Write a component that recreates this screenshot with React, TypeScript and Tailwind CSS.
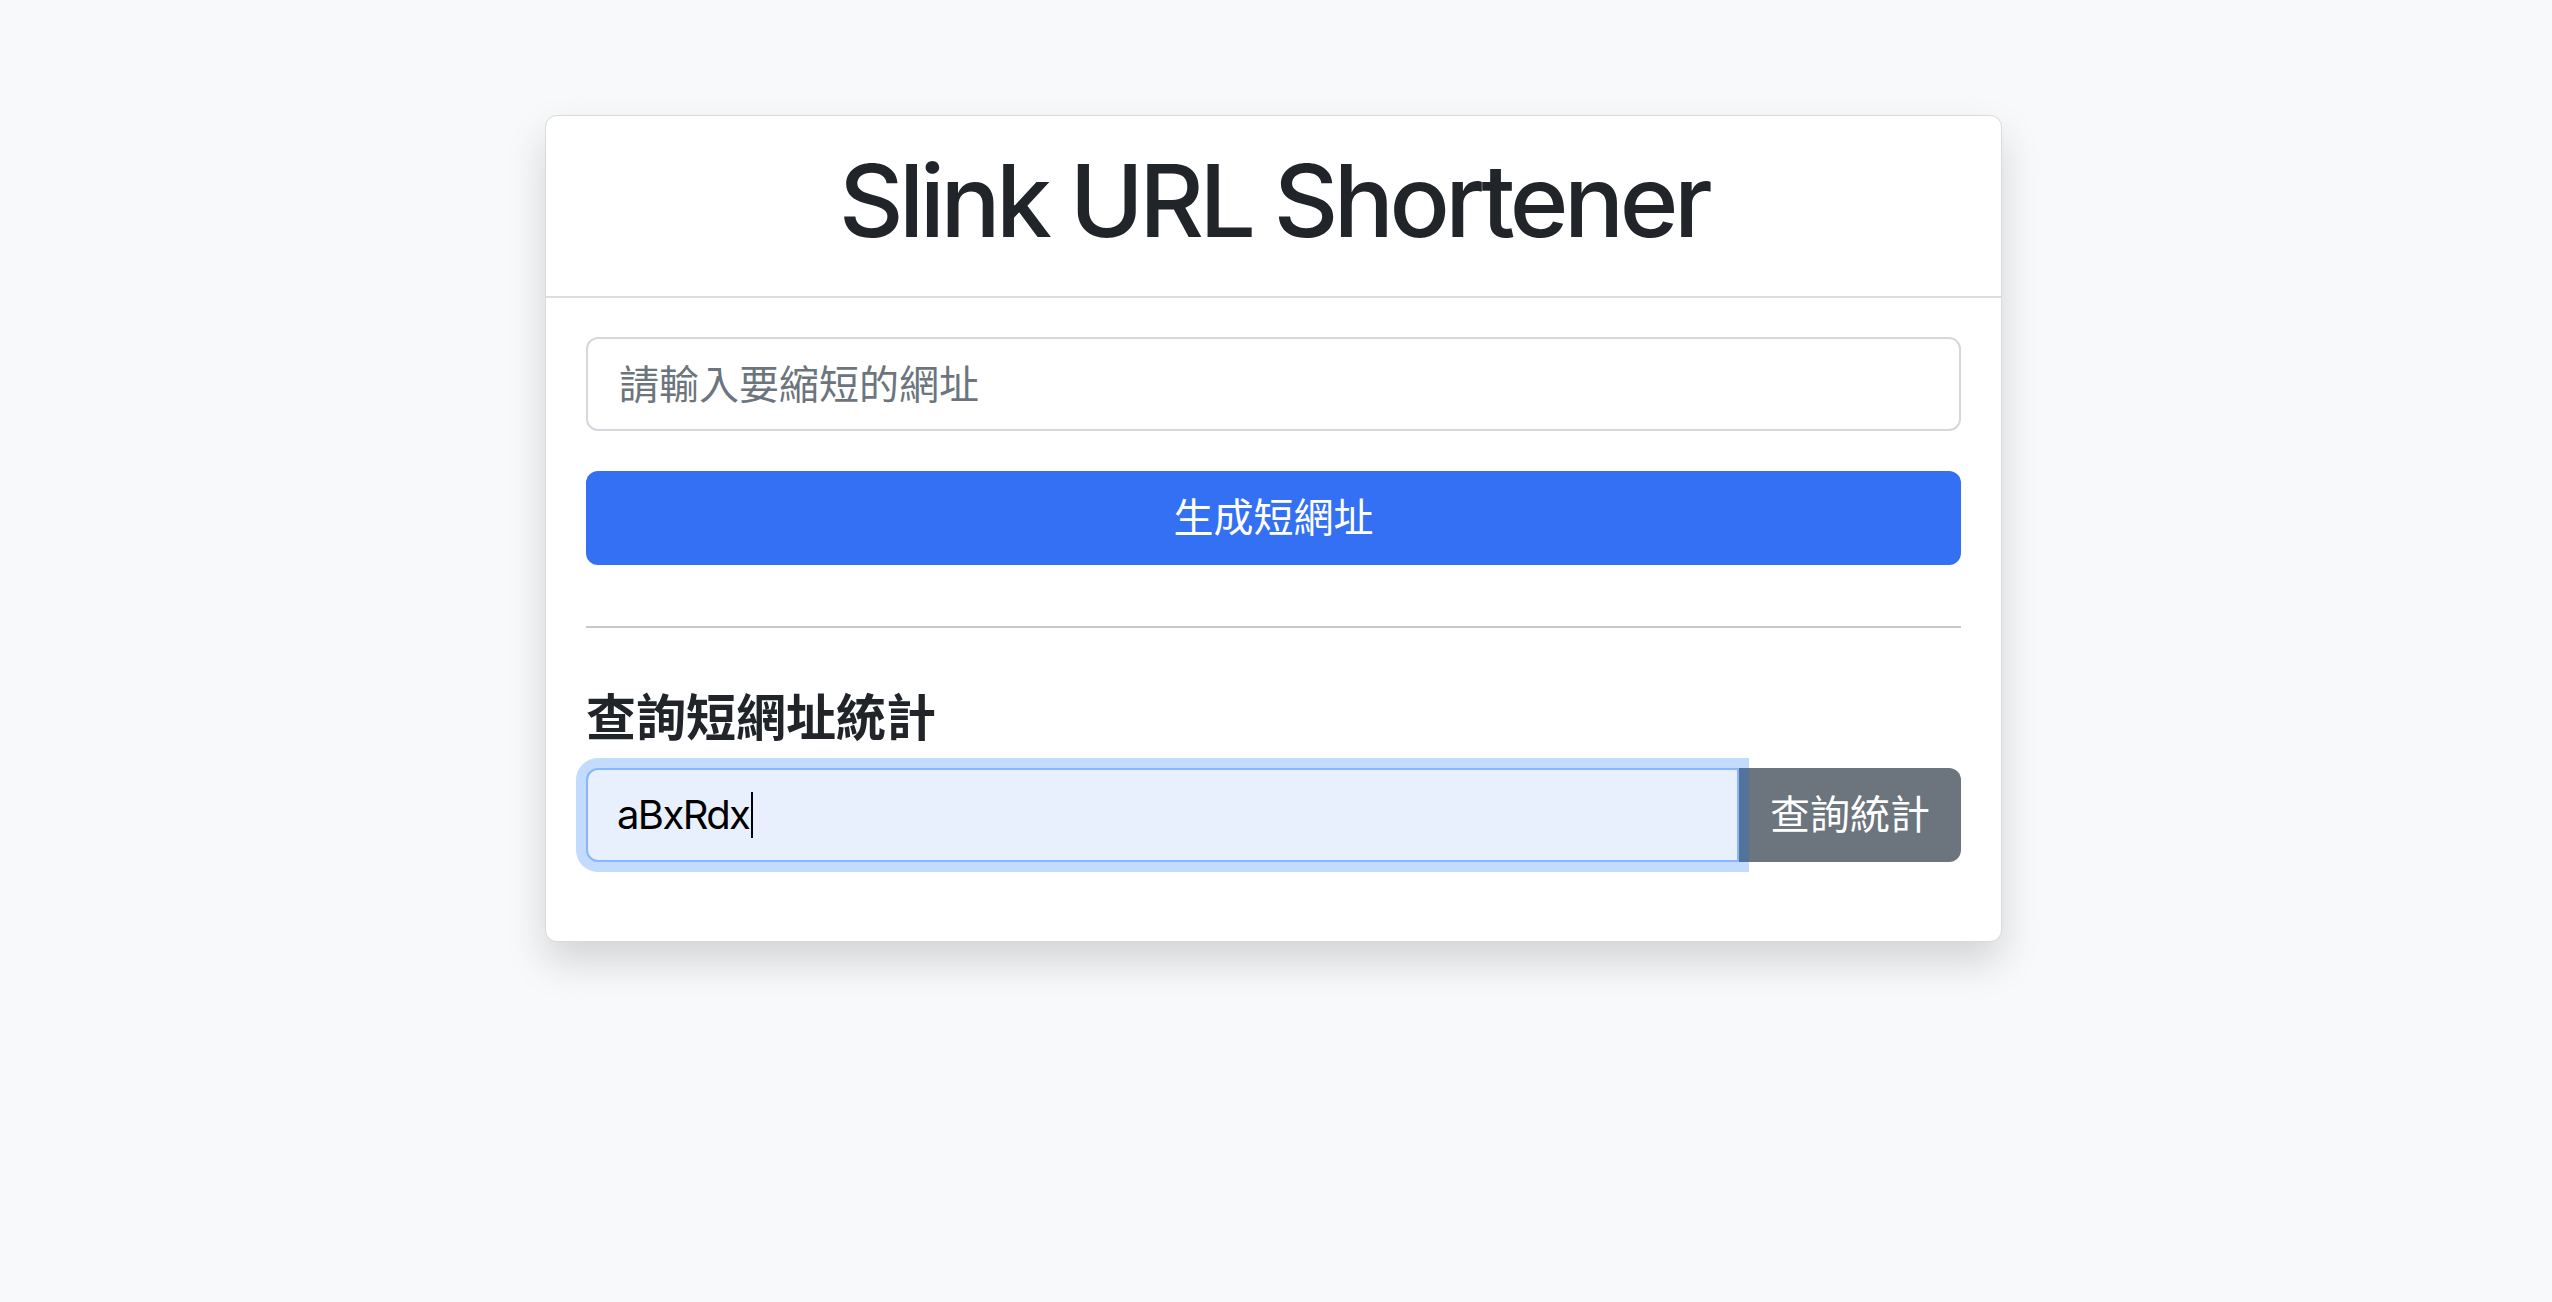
export default function App() {
  return (
    <div className="min-h-screen bg-[#f8f9fa] pt-[115px] font-['Inter','Noto_Sans_CJK_TC',sans-serif]">
      <div className="flex justify-center pr-[5px]">
        <div className="w-[1457px] rounded-[12px] border border-[#d9dadb] bg-white shadow-[0_20px_40px_rgba(0,0,0,0.15)]">
          <div className="border-b-2 border-[#dcdddd] px-[40px] pt-[25px] pb-[35px]">
            <h1 className="text-center text-[100px] leading-[120px] font-medium tracking-[-0.045em] text-[#212529]">
              Slink URL Shortener
            </h1>
          </div>
          <div className="px-[40px] pt-[39px] pb-[79px]">
            <input
              placeholder="請輸入要縮短的網址"
              className="block h-[94px] w-full rounded-[12px] border-2 border-[#d4d8dc] bg-white px-[31px] text-[40px] text-[#212529] outline-none placeholder:text-[#6c757d]"
            />
            <button className="mt-[40px] block h-[94px] w-full rounded-[12px] bg-[#3470f4] text-[40px] text-white">
              生成短網址
            </button>
            <hr className="mt-[61px] h-[2px] border-0 bg-[#c7c8c9]" />
            <h5 className="mt-[60px] text-[50px] leading-[60px] font-bold text-[#212529]">
              查詢短網址統計
            </h5>
            <div className="mt-[20px] flex h-[94px]">
              <div className="relative z-10 flex flex-1 items-center rounded-l-[12px] border-2 border-[#86b7fe] bg-[#e8f0fe] pl-[29px] text-[40px] text-black shadow-[0_0_0_10px_rgba(13,110,253,0.25)]">
                <span className="tracking-[-0.04em]">aBxRdx</span>
                <span className="ml-[2px] inline-block h-[46px] w-[2px] bg-black" />
              </div>
              <button className="w-[222px] rounded-r-[12px] bg-[#6c757d] text-[40px] text-white">
                查詢統計
              </button>
            </div>
          </div>
        </div>
      </div>
    </div>
  );
}
